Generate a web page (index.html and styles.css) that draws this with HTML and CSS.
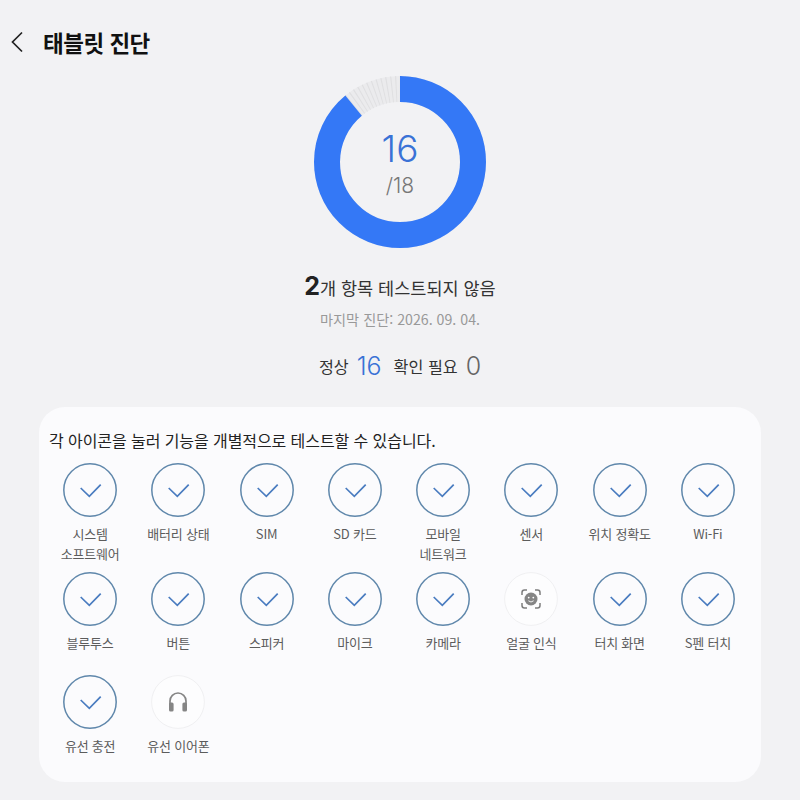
FILE: index.html
```html
<!DOCTYPE html>
<html lang="ko">
<head>
    <meta charset="UTF-8">
    <title>태블릿 진단</title>
    <link rel="stylesheet" href="styles.css">
</head>
<body>
    <svg class="defs" width="0" height="0">
        <symbol id="check" viewBox="0 0 54 54">
            <circle cx="27" cy="27" r="26.2" fill="none" stroke="#5f87ab" stroke-width="1.5"/>
            <path d="M17.7 25 L26.3 33.4 L37.7 21.7" fill="none" stroke="#4a7cc0" stroke-width="1.7"/>
        </symbol>
    </svg>

    <div class="header">
        <svg class="back" width="14" height="22" viewBox="0 0 14 22">
            <path d="M12 1.5 L2.5 11 L12 20.5" fill="none" stroke="#222" stroke-width="1.7"/>
        </svg>
        <h1>태블릿 진단</h1>
    </div>

    <div class="ring">
        <svg width="172" height="172" viewBox="0 0 172 172">
            <!-- 16 of 18 = 320deg, circumference of r73 = 458.67 -->
            <circle class="ring-left" cx="86" cy="86" r="73" transform="rotate(-90 86 86)"/>
            <circle class="ring-ticks" cx="86" cy="86" r="73" transform="rotate(-90 86 86)"/>
            <circle class="ring-done" cx="86" cy="86" r="73" transform="rotate(-90 86 86)"/>
        </svg>
        <div class="ring-text">
            <div class="ring-num">16</div>
            <div class="ring-total">/18</div>
        </div>
    </div>

    <p class="status"><b>2</b>개 항목 테스트되지 않음</p>
    <p class="last">마지막 진단: 2026. 09. 04.</p>
    <div class="counts">
        <span>정상</span><span class="count blue">16</span>
        <span class="need">확인 필요</span><span class="count">0</span>
    </div>

    <div class="card">
        <p class="hint">각 아이콘을 눌러 기능을 개별적으로 테스트할 수 있습니다.</p>
        <div class="grid">
            <div class="item"><svg class="ico"><use href="#check"/></svg><span>시스템<br>소프트웨어</span></div>
            <div class="item"><svg class="ico"><use href="#check"/></svg><span>배터리 상태</span></div>
            <div class="item"><svg class="ico"><use href="#check"/></svg><span>SIM</span></div>
            <div class="item"><svg class="ico"><use href="#check"/></svg><span>SD 카드</span></div>
            <div class="item"><svg class="ico"><use href="#check"/></svg><span>모바일<br>네트워크</span></div>
            <div class="item"><svg class="ico"><use href="#check"/></svg><span>센서</span></div>
            <div class="item"><svg class="ico"><use href="#check"/></svg><span>위치 정확도</span></div>
            <div class="item"><svg class="ico"><use href="#check"/></svg><span>Wi-Fi</span></div>

            <div class="item"><svg class="ico"><use href="#check"/></svg><span>블루투스</span></div>
            <div class="item"><svg class="ico"><use href="#check"/></svg><span>버튼</span></div>
            <div class="item"><svg class="ico"><use href="#check"/></svg><span>스피커</span></div>
            <div class="item"><svg class="ico"><use href="#check"/></svg><span>마이크</span></div>
            <div class="item"><svg class="ico"><use href="#check"/></svg><span>카메라</span></div>
            <div class="item">
                <svg class="ico" viewBox="0 0 54 54">
                    <circle cx="27" cy="27" r="26.4" fill="#fdfdfe" stroke="#f0f0f2" stroke-width="1"/>
                    <path d="M18 23 V20.5 Q18 18 20.5 18 H23 M31 18 H33.5 Q36 18 36 20.5 V23 M36 31 V33.5 Q36 36 33.5 36 H31 M23 36 H20.5 Q18 36 18 33.5 V31" fill="none" stroke="#7d7d7d" stroke-width="1.5"/>
                    <circle cx="27" cy="27" r="6.5" fill="#858585"/>
                    <circle cx="24.7" cy="25.6" r="0.9" fill="#fff"/>
                    <circle cx="29.3" cy="25.6" r="0.9" fill="#fff"/>
                    <path d="M24.4 28.8 Q27 31.2 29.6 28.8" fill="none" stroke="#fff" stroke-width="0.9"/>
                </svg>
                <span>얼굴 인식</span>
            </div>
            <div class="item"><svg class="ico"><use href="#check"/></svg><span>터치 화면</span></div>
            <div class="item"><svg class="ico"><use href="#check"/></svg><span>S펜 터치</span></div>

            <div class="item"><svg class="ico"><use href="#check"/></svg><span>유선 충전</span></div>
            <div class="item">
                <svg class="ico" viewBox="0 0 54 54">
                    <circle cx="27" cy="27" r="26.4" fill="#fdfdfe" stroke="#f0f0f2" stroke-width="1"/>
                    <path d="M19 30 V26 A8 8 0 0 1 35 26 V30" fill="none" stroke="#858585" stroke-width="1.7"/>
                    <rect x="18" y="27.5" width="4.6" height="9" rx="1.6" fill="#858585"/>
                    <rect x="31.4" y="27.5" width="4.6" height="9" rx="1.6" fill="#858585"/>
                </svg>
                <span>유선 이어폰</span>
            </div>
        </div>
    </div>
</body>
</html>
```

FILE: styles.css
```css
body {
    margin: 0;
    background: #f2f2f4;
    color: #222;
    font-family: "Noto Sans CJK KR", "Inter", sans-serif;
    height: 800px;
    overflow: hidden;
}

.defs {
    display: block;
}

.header {
    display: flex;
    align-items: center;
    height: 30px;
    padding: 27px 0 0 10px;
    margin-bottom: 1px;
}

.back {
    margin-right: 19px;
}

h1 {
    margin: 0;
    font-size: 22.5px;
    font-weight: 700;
    letter-spacing: -0.5px;
    color: #111;
}

/* donut */
.ring {
    position: relative;
    width: 172px;
    height: 172px;
    margin: 19px auto 0;
}

.ring svg {
    display: block;
}

.ring circle {
    fill: none;
    stroke-width: 26;
}

.ring-left {
    stroke: #ebebed;
}

.ring-ticks {
    stroke: #dfdfe1;
    stroke-dasharray: 1 3.2;
}

.ring-done {
    stroke: #3478f6;
    stroke-dasharray: 407.7 458.67;
}

.ring-text {
    position: absolute;
    top: 51px;
    left: 0;
    width: 100%;
    text-align: center;
}

.ring-num {
    font-family: "Inter", sans-serif;
    font-size: 37px;
    font-weight: 300;
    line-height: 44px;
    color: #3a72d6;
}

.ring-total {
    font-family: "Inter", sans-serif;
    font-size: 21px;
    font-weight: 300;
    line-height: 26px;
    margin-top: 2px;
    color: #777;
}

.status {
    margin: 23px 0 0;
    text-align: center;
    font-size: 17.5px;
    line-height: 30px;
    color: #333;
}

.status b {
    font-family: "Inter", sans-serif;
    font-size: 25px;
    font-weight: 700;
    color: #222;
}

.last {
    margin: 6px 0 0;
    text-align: center;
    font-size: 14.2px;
    line-height: 20px;
    color: #999;
}

.counts {
    display: flex;
    justify-content: center;
    align-items: center;
    gap: 8px;
    height: 30px;
    margin-top: 22px;
    font-size: 16.2px;
    color: #333;
}

.need {
    margin-left: 4px;
}

.count {
    font-family: "Inter", sans-serif;
    font-size: 25px;
    font-weight: 300;
    color: #666;
}

.blue {
    color: #3a72d6;
}

/* test list */
.card {
    box-sizing: border-box;
    width: 722px;
    height: 375px;
    margin: 26px 0 0 39px;
    padding: 20px 9px 0 7px;
    background: #fbfbfd;
    border-radius: 26px;
}

.hint {
    margin: 0 0 0 3px;
    font-size: 16px;
    line-height: 26px;
    letter-spacing: -0.08px;
    color: #222;
}

.grid {
    display: grid;
    grid-template-columns: repeat(8, 88.25px);
    grid-template-rows: 109px 103px auto;
    margin-top: 10px;
}

.item {
    display: flex;
    flex-direction: column;
    align-items: center;
    font-size: 13px;
    line-height: 20px;
    letter-spacing: -0.2px;
    color: #5c5c5c;
    text-align: center;
}

.ico {
    display: block;
    width: 54px;
    height: 54px;
    margin-bottom: 7px;
}
```
